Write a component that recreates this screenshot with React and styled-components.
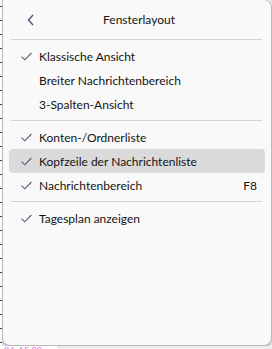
import styled, { createGlobalStyle } from "styled-components";

const GlobalStyle = createGlobalStyle`
  html, body {
    margin: 0;
    padding: 0;
    background: #e6e6e6;
    font-family: Lato, "Noto Sans", "Liberation Sans", sans-serif;
  }
`;

const items = [
  [
    { label: "Klassische Ansicht", checked: true },
    { label: "Breiter Nachrichtenbereich" },
    { label: "3-Spalten-Ansicht" },
  ],
  [
    { label: "Konten-/Ordnerliste", checked: true },
    { label: "Kopfzeile der Nachrichtenliste", checked: true, hover: true },
    { label: "Nachrichtenbereich", checked: true, shortcut: "F8" },
  ],
  [{ label: "Tagesplan anzeigen", checked: true }],
];

const Check = () => (
  <svg width="11" height="9" viewBox="0 0 11 9" fill="none">
    <path d="M0.6 4.6 L3.8 7.8 L10.4 1" stroke="#5c5a78" strokeWidth="1.1" />
  </svg>
);

const Chevron = () => (
  <svg width="8" height="12" viewBox="0 0 8 12" fill="none">
    <path d="M6 1 L1.5 6 L6 11" stroke="#4d4b6b" strokeWidth="1.3" />
  </svg>
);

const App = () => {
  return (
    <>
      <GlobalStyle />
      <Screen>
        <Sliver />
        <Column>
          <Panel>
            <Header>
              <BackButton>
                <Chevron />
              </BackButton>
              <Title>Fensterlayout</Title>
            </Header>
            <Divider />
            {items.map((group, gi) => (
              <Group key={gi} $first={gi === 0}>
                {gi > 0 && <Divider />}
                {group.map((item) => (
                  <Row key={item.label} $hover={item.hover}>
                    <CheckSlot>{item.checked && <Check />}</CheckSlot>
                    <Label>{item.label}</Label>
                    {item.shortcut && <Shortcut>{item.shortcut}</Shortcut>}
                  </Row>
                ))}
              </Group>
            ))}
          </Panel>
          <Peek>
            <PeekText>24, 15:00</PeekText>
          </Peek>
        </Column>
      </Screen>
    </>
  );
};

export default App;

const Screen = styled.div`
  display: flex;
  width: 272px;
  height: 349px;
  overflow: hidden;
`;

const Sliver = styled.div`
  width: 2px;
  background: repeating-linear-gradient(
    to bottom,
    #ffffff 0 6px,
    #3a3a4a 6px 7px,
    #ffffff 7px 14px
  );
`;

const Column = styled.div`
  display: flex;
  flex-direction: column;
  width: 270px;
`;

const Panel = styled.div`
  box-sizing: border-box;
  width: 270px;
  height: 346px;
  flex-shrink: 0;
  background: #f9f9f9;
  border: 1px solid #b9b9b9;
  border-top: none;
  border-radius: 0 8px 8px 8px;
  box-shadow: 0 1px 1px rgba(0, 0, 0, 0.18);
  padding: 0 6px;
`;

const Header = styled.div`
  position: relative;
  display: flex;
  align-items: center;
  justify-content: center;
  height: 39px;
`;

const BackButton = styled.div`
  position: absolute;
  left: 18px;
  top: 14px;
  display: flex;
`;

const Title = styled.span`
  font-size: 12px;
  font-weight: 400;
  color: #141414;
  padding-left: 4px;
`;

const Divider = styled.div`
  height: 1px;
  background: #d4d4d4;
  margin: 0 3px 0 2px;
`;

const Group = styled.div`
  display: flex;
  flex-direction: column;
  padding-top: ${(p) => (p.$first ? "4px" : "0")};

  ${Divider} {
    margin: 4px 3px 4px 2px;
  }
`;

const Row = styled.div`
  display: flex;
  align-items: center;
  height: 24px;
  border-radius: 4px;
  background: ${(p) => (p.$hover ? "#dadada" : "transparent")};
  color: #141414;
`;

const CheckSlot = styled.div`
  display: flex;
  width: 30px;
  padding-left: 12px;
  box-sizing: border-box;
`;

const Label = styled.span`
  flex: 1;
  font-size: 12px;
`;

const Shortcut = styled.span`
  font-size: 12px;
  margin-right: 8px;
`;

const Peek = styled.div`
  flex: 1;
  display: flex;
  align-items: flex-start;
  background: linear-gradient(to right, #ffffff 0 55px, #ececec 55px);
`;

const PeekText = styled.span`
  font-size: 9px;
  line-height: 9px;
  color: #e07ae8;
  padding-left: 2px;
`;
